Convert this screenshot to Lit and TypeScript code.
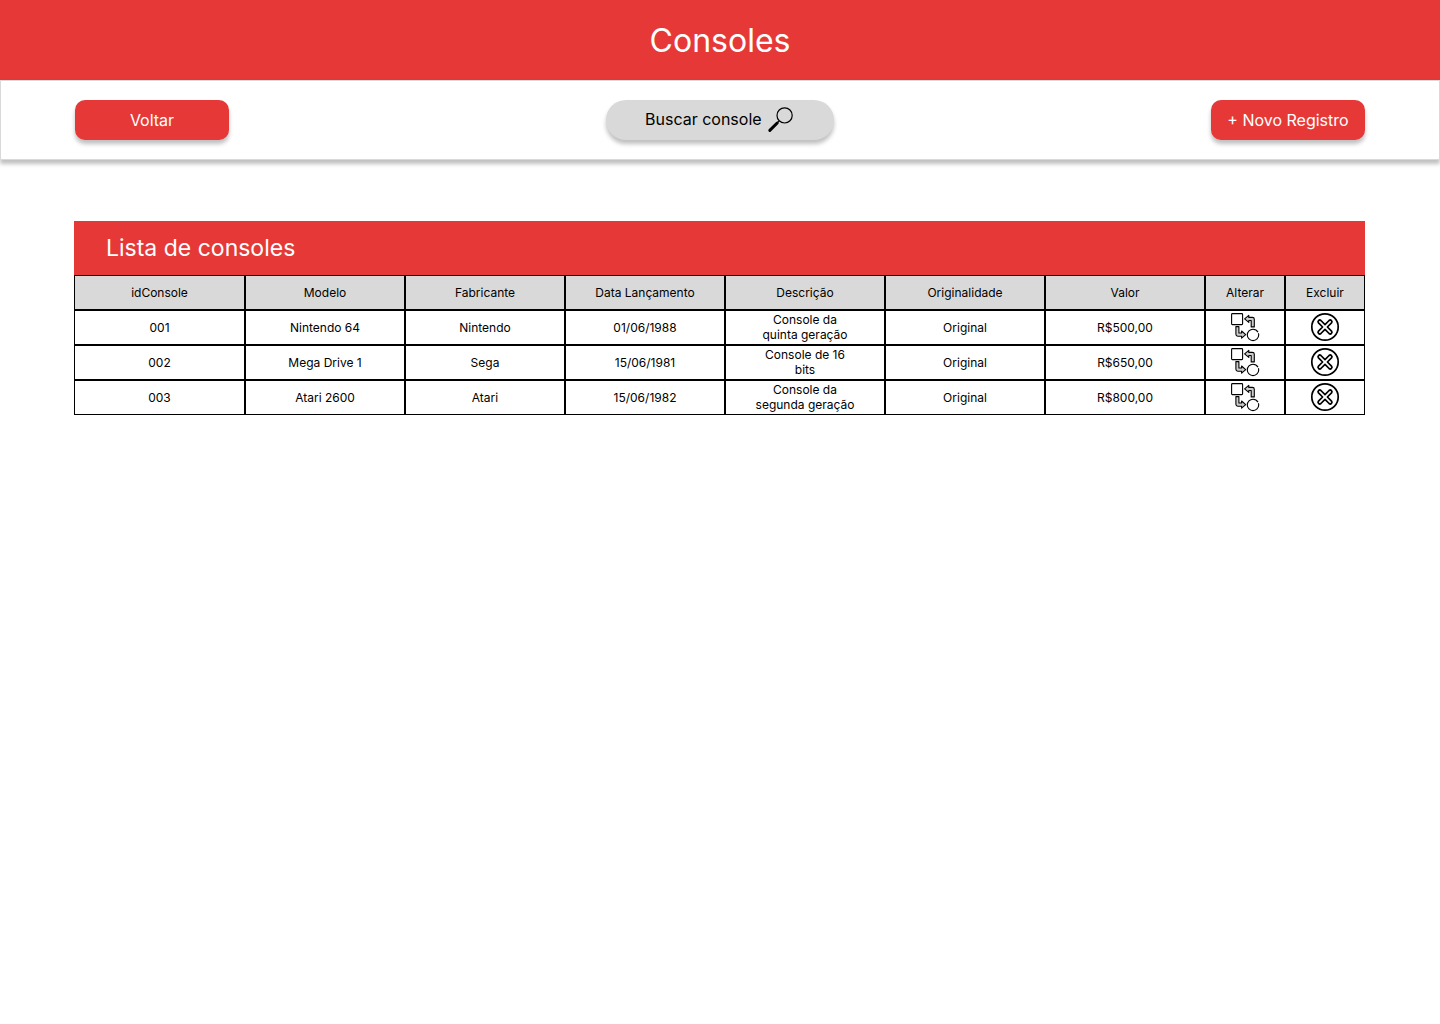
import { LitElement, html, css } from "lit";
import { customElement, state } from "lit/decorators.js";

interface ConsoleRecord {
  id: string;
  model: string;
  maker: string;
  launch: string;
  description: string;
  originality: string;
  price: string;
}

const swapIcon = html`
  <svg class="icon-swap" viewBox="0 0 30 30" aria-hidden="true">
    <rect x="1.6" y="1.6" width="11" height="11" rx="0.8" />
    <circle cx="23" cy="22.9" r="5.7" stroke-dasharray="32 1.2" />
    <path class="arrow" d="M14.6 6.9 L18.8 3.4 V5.4 H22.4 Q24.3 5.4 24.3 7.3 V14.9 H21.2 V8.5 H18.8 V10.4 Z" />
    <path class="arrow" d="M5.9 14.6 H8.9 V21 H11.6 V19 L15.7 22.6 L11.6 26.2 V24.2 H7.8 Q5.9 24.2 5.9 22.3 Z" />
  </svg>
`;

const deleteIcon = html`
  <svg class="icon-delete" viewBox="0 0 30 30" aria-hidden="true">
    <circle cx="15" cy="15" r="13.2" />
    <path
      d="M15 12.6 L19.1 8.5 A1.7 1.7 0 0 1 21.5 10.9 L17.4 15 L21.5 19.1 A1.7 1.7 0 0 1 19.1 21.5 L15 17.4 L10.9 21.5 A1.7 1.7 0 0 1 8.5 19.1 L12.6 15 L8.5 10.9 A1.7 1.7 0 0 1 10.9 8.5 Z"
    />
  </svg>
`;

@customElement("app-root")
export class AppRoot extends LitElement {
  static styles = css`
    :host {
      display: block;
      font-family: Inter, "Liberation Sans", sans-serif;
      font-size: 12px;
      line-height: 15px;
      color: #000;
      --red: #e63937;
      --grey: #d9d9d9;
      --shadow: 0 4px 4px rgba(0, 0, 0, 0.25);
    }
    * {
      box-sizing: border-box;
    }
    .banner {
      display: flex;
      align-items: center;
      justify-content: center;
      min-height: 80px;
      padding-top: 2px;
      background: var(--red);
      color: #fff;
    }
    .title {
      margin: 0;
      font-size: 32px;
      line-height: 40px;
      font-weight: 400;
    }
    .toolbar {
      display: grid;
      grid-template-columns: 1fr auto 1fr;
      align-items: center;
      padding: 19px 74px;
      border: 1px solid var(--grey);
      background: #fff;
      box-shadow: var(--shadow);
    }
    .button {
      display: flex;
      align-items: center;
      justify-content: center;
      width: 154px;
      height: 40px;
      padding: 0;
      border: 0;
      border-radius: 10px;
      background: var(--red);
      box-shadow: var(--shadow);
      color: #fff;
      font: inherit;
      font-size: 16px;
      text-decoration: none;
      cursor: pointer;
    }
    .button-end {
      justify-self: end;
    }
    .search {
      display: flex;
      align-items: center;
      width: 228px;
      height: 40px;
      padding: 0 39px;
      border-radius: 20px;
      background: var(--grey);
      box-shadow: var(--shadow);
    }
    .search-input {
      flex: 1;
      min-width: 0;
      height: 22px;
      padding: 0 0 2px;
      border: 0;
      outline: 0;
      background: none;
      color: #000;
      font: inherit;
      font-size: 16px;
      line-height: 20px;
    }
    .search-input::placeholder {
      color: #000;
      opacity: 1;
    }
    .search-button {
      display: flex;
      padding: 0;
      border: 0;
      background: none;
      cursor: pointer;
    }
    .icon-search {
      width: 28px;
      height: 28px;
      fill: none;
      stroke: #000;
    }
    .content {
      padding: 61px 75px 0 74px;
    }
    .list-title {
      margin: 0;
      padding: 12px 32px;
      background: var(--red);
      color: #fff;
      font-size: 23px;
      line-height: 30px;
      font-weight: 400;
    }
    .table {
      width: 100%;
      table-layout: fixed;
      border-collapse: separate;
      border-spacing: 0;
      text-align: center;
    }
    .col-id {
      width: 171px;
    }
    .col-action {
      width: 80px;
    }
    .head,
    .cell {
      height: 35px;
      padding: 0;
      border: 1px solid #000;
      vertical-align: middle;
      font-weight: 400;
    }
    .head {
      background: var(--grey);
    }
    .description {
      display: block;
      max-width: 102px;
      margin: 0 auto;
      padding-bottom: 2px;
    }
    .action {
      display: flex;
      margin: 0 auto;
      padding: 0 0 1px;
      border: 0;
      background: none;
      cursor: pointer;
    }
    .icon-swap,
    .icon-delete {
      width: 30px;
      height: 30px;
      fill: none;
      stroke: #000;
      stroke-linejoin: round;
    }
    .icon-swap {
      stroke-width: 1.1;
    }
    .arrow {
      fill: #ccc;
    }
    .icon-delete {
      stroke-width: 1.7;
    }
  `;

  @state() private records: ConsoleRecord[] = [
    { id: "001", model: "Nintendo 64", maker: "Nintendo", launch: "01/06/1988", description: "Console da quinta geração", originality: "Original", price: "R$500,00" },
    { id: "002", model: "Mega Drive 1", maker: "Sega", launch: "15/06/1981", description: "Console de 16 bits", originality: "Original", price: "R$650,00" },
    { id: "003", model: "Atari 2600", maker: "Atari", launch: "15/06/1982", description: "Console da segunda geração", originality: "Original", price: "R$800,00" },
  ];

  private headings = ["idConsole", "Modelo", "Fabricante", "Data Lançamento", "Descrição", "Originalidade", "Valor", "Alterar", "Excluir"];

  private renderRow(r: ConsoleRecord) {
    return html`
      <tr>
        <td class="cell">${r.id}</td>
        <td class="cell">${r.model}</td>
        <td class="cell">${r.maker}</td>
        <td class="cell">${r.launch}</td>
        <td class="cell"><span class="description">${r.description}</span></td>
        <td class="cell">${r.originality}</td>
        <td class="cell">${r.price}</td>
        <td class="cell"><button class="action" type="button" aria-label="Alterar ${r.model}">${swapIcon}</button></td>
        <td class="cell"><button class="action" type="button" aria-label="Excluir ${r.model}">${deleteIcon}</button></td>
      </tr>
    `;
  }

  render() {
    return html`
      <header class="banner"><h1 class="title">Consoles</h1></header>
      <nav class="toolbar">
        <a class="button" href="#">Voltar</a>
        <form class="search" role="search" @submit=${(e: Event) => e.preventDefault()}>
          <input class="search-input" type="text" aria-label="Buscar console" placeholder="Buscar console" />
          <button class="search-button" type="submit" aria-label="Buscar">
            <svg class="icon-search" viewBox="0 0 28 28" aria-hidden="true">
              <circle cx="17.6" cy="9.4" r="7.6" stroke-width="1.2" />
              <path d="M12.2 14.8 L10 17" stroke-width="1.2" />
              <path d="M10.2 17 L2.8 24.4" stroke-width="3" stroke-linecap="round" />
            </svg>
          </button>
        </form>
        <button class="button button-end" type="button">+ Novo Registro</button>
      </nav>
      <main class="content">
        <h2 class="list-title" id="list-title">Lista de consoles</h2>
        <table class="table" aria-labelledby="list-title">
          <colgroup>
            <col class="col-id" />
            <col span="6" />
            <col class="col-action" span="2" />
          </colgroup>
          <thead>
            <tr>${this.headings.map((h) => html`<th class="head" scope="col">${h}</th>`)}</tr>
          </thead>
          <tbody>${this.records.map((r) => this.renderRow(r))}</tbody>
        </table>
      </main>
    `;
  }
}
